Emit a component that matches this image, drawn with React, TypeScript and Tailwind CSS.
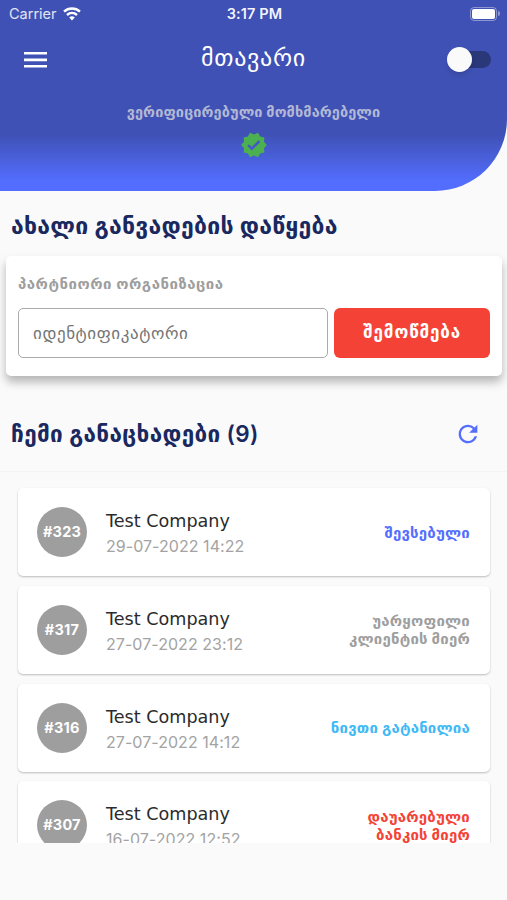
import { MdRefresh, MdVerified } from 'react-icons/md';

const APPLICATIONS = [
  { id: 323, company: 'Test Company', date: '29-07-2022 14:22', status: ['შევსებული'], color: 'text-[#536dfe]' },
  { id: 317, company: 'Test Company', date: '27-07-2022 23:12', status: ['უარყოფილი', 'კლიენტის მიერ'], color: 'text-[#9e9e9e]' },
  { id: 316, company: 'Test Company', date: '27-07-2022 14:12', status: ['ნივთი გატანილია'], color: 'text-[#40b9f5]' },
  { id: 307, company: 'Test Company', date: '16-07-2022 12:52', status: ['დაუარებული', 'ბანკის მიერ'], color: 'text-[#f44336]' },
];

function StatusBar() {
  return (
    <div className="grid grid-cols-3 items-center h-[27px] pl-[9px] pr-[7px]">
      <div className="flex items-center gap-1.5 text-[14.5px] text-white/85">
        <span className="pt-px">Carrier</span>
        <svg width="18" height="14" viewBox="0 0 18 14" fill="none" stroke="white" strokeWidth="2.4">
          <path d="M1 4.6C5.5 .4 12.5 .4 17 4.6" />
          <path d="M4 8C7 5.4 11 5.4 14 8" />
          <path d="M6.2 10.4Q9 8.2 11.8 10.4L9 13.6Z" fill="white" stroke="none" />
        </svg>
      </div>
      <div className="text-center font-semibold text-[14.5px] tracking-[0.1px] text-white/95">3:17 PM</div>
      <div className="flex justify-end items-center gap-px">
        <div className="w-[27px] h-[14px] rounded-[4px] border border-white/40 p-px">
          <div className="h-full rounded-[2px] bg-white" />
        </div>
        <div className="w-[2px] h-[5px] rounded-r-full bg-white/40" />
      </div>
    </div>
  );
}

function Header() {
  return (
    <header className="h-[191px] rounded-br-[72px] bg-linear-to-b from-[#3f51b5] from-[70%] to-[#536dfe] to-[95%] text-white">
      <StatusBar />
      <div className="grid grid-cols-[60px_1fr_60px] items-center h-[64px]">
        <svg className="ml-6 mt-px" width="23" height="16" viewBox="0 0 23 16" fill="currentColor">
          <path d="M0 0h23v2.6H0zM0 6.6h23v2.6H0zM0 13h23v2.6H0z" />
        </svg>
        <h1 className="text-center text-[24px] leading-none tracking-[0.7px] pb-0.5">მთავარი</h1>
        <div className="flex items-center w-[44px]">
          <div className="size-[25px] rounded-full bg-[#fafafa] shadow-md z-10" />
          <div className="w-[30px] h-[17px] -ml-[11px] rounded-r-full bg-[#2a3778]" />
        </div>
      </div>
      <div className="flex flex-col items-center pt-3">
        <p className="text-[14.5px] leading-[18px] font-semibold tracking-[0.1px] text-[#b3b8d4]">ვერიფიცირებული მომხმარებელი</p>
        <MdVerified className="size-[28px] mt-2.5 text-[#4caf50]" />
      </div>
    </header>
  );
}

function NewInstallment() {
  return (
    <section>
      <h2 className="pt-[22px] pb-px pl-[11px] text-[23px] leading-[26px] font-semibold tracking-[0.25px] text-[#1a2860] whitespace-nowrap">
        ახალი განვადების დაწყება
      </h2>
      <div className="mt-4 ml-1.5 mr-[5px] h-[120px] rounded-[5px] bg-white px-3 pt-[18px] shadow-[0_6px_10px_rgba(0,0,0,0.28)]">
        <p className="text-[15px] leading-5 font-semibold tracking-[0.5px] text-[#9e9e9e]">პარტნიორი ორგანიზაცია</p>
        <div className="flex gap-1.5 mt-3.5">
          <input
            className="w-[311px] h-[50px] rounded-[5px] border border-[#ababab] px-3.5 text-[17px] tracking-[0.6px] text-[#757575] placeholder:text-[#757575]"
            placeholder="იდენტიფიკატორი"
          />
          <button className="w-[156px] h-[50px] rounded-[6px] bg-[#f44336] font-bold text-[17px] tracking-[0.9px] text-white">
            შემოწმება
          </button>
        </div>
      </div>
    </section>
  );
}

function Applications() {
  return (
    <section>
      <div className="flex items-center justify-between mt-[23px] h-[73px] pl-[11px] pr-[25px] border-b border-[#f4f4f4]">
        <h2 className="pb-0.5 text-[22.5px] font-semibold tracking-[0.35px] text-[#1a2860] whitespace-nowrap">ჩემი განაცხადები (9)</h2>
        <MdRefresh className="size-[28px] mb-0.5 text-[#536dfe]" />
      </div>
      <div className="h-[371px] overflow-hidden pt-4 pl-[18px] pr-[17px]">
        {APPLICATIONS.map(item => (
          <div key={item.id} className="flex items-center h-[88px] mb-[9.75px] pl-[19px] pr-5 rounded-[5px] bg-white shadow-[0_1px_2px_rgba(0,0,0,0.25)]">
            <div className="flex items-center justify-center size-[50px] rounded-full bg-[#9e9e9e] text-[14.5px] font-bold tracking-[0.2px] text-white">
              #{item.id}
            </div>
            <div className="ml-[19px] flex-1 pt-[3px]">
              <p className="text-[17.6px] leading-[25px] text-[#2b2b2b] font-['DejaVu_Sans']">{item.company}</p>
              <p className="text-base leading-6 tracking-[0.05px] text-[#a3a3a3]">{item.date}</p>
            </div>
            <div className={`text-right text-[15px] leading-[18px] font-bold tracking-[0.2px] pt-px ${item.color}`}>
              {item.status.map(line => (
                <p key={line}>{line}</p>
              ))}
            </div>
          </div>
        ))}
      </div>
    </section>
  );
}

export default function App() {
  return (
    <div className="w-[507px] h-[900px] overflow-hidden bg-[#fafafa] font-['Inter','Noto_Sans','DejaVu_Sans',sans-serif]">
      <Header />
      <NewInstallment />
      <Applications />
    </div>
  );
}
